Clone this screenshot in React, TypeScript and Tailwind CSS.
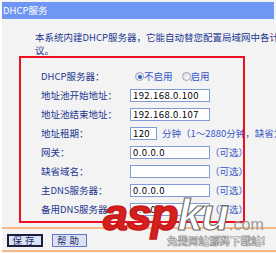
import React from "react";

const Field = ({ w, value }: { w: string; value: string }) => (
  <div
    className={`${w} h-[13px] shrink-0 border border-[#7f9bd8] bg-white pl-[2px] text-[9.5px] leading-[11px] tracking-[0.4px] text-black`}
  >
    {value}
  </div>
);

const Radio = ({ checked }: { checked?: boolean }) => (
  <span className="relative inline-flex h-[9px] w-[9px] shrink-0 items-center justify-center rounded-full border border-[#9aa3b0] bg-gradient-to-br from-[#d8dce2] to-[#ffffff]">
    {checked && <span className="h-[4px] w-[4px] rounded-full bg-[#2a5fd0]" />}
  </span>
);

const Opt = () => <span className="whitespace-nowrap text-[#3556c8]">（可选）</span>;

export default function App() {
  const rows: { label: string; content: React.ReactNode }[] = [
    {
      label: "DHCP服务器：",
      content: (
        <div className="ml-[5px] flex items-center whitespace-nowrap text-[#3556c8]">
          <Radio checked />
          <span>不启用</span>
          <span className="ml-[9px]" />
          <Radio />
          <span>启用</span>
        </div>
      ),
    },
    { label: "地址池开始地址：", content: <Field w="w-[80px]" value="192.168.0.100" /> },
    { label: "地址池结束地址：", content: <Field w="w-[80px]" value="192.168.0.107" /> },
    {
      label: "地址租期：",
      content: (
        <>
          <Field w="w-[27px]" value="120" />
          <span className="ml-[5px] whitespace-nowrap text-[#3556c8]">分钟（1～2880分钟，缺省为120分钟）</span>
        </>
      ),
    },
    {
      label: "网关：",
      content: (
        <>
          <Field w="w-[80px]" value="0.0.0.0" />
          <Opt />
        </>
      ),
    },
    {
      label: "缺省域名：",
      content: (
        <>
          <Field w="w-[80px]" value="" />
          <Opt />
        </>
      ),
    },
    {
      label: "主DNS服务器：",
      content: (
        <>
          <Field w="w-[80px]" value="0.0.0.0" />
          <Opt />
        </>
      ),
    },
    {
      label: "备用DNS服务器：",
      content: (
        <>
          <Field w="w-[80px]" value="0.0.0.0" />
          <Opt />
        </>
      ),
    },
  ];

  return (
    <div className="relative h-[253px] w-[276px] overflow-hidden bg-white font-['Noto_Sans_CJK_SC',sans-serif] text-[9.5px]">
      <div className="ml-[2px] h-full bg-[#f3f3f3]">
        <div className="pt-[2px]">
          <div className="mr-[2px] h-[17px] bg-[#6f96f4] pl-[1px] leading-[17px] text-white">DHCP服务</div>
        </div>
        <div className="mt-[12px] pl-[33px] leading-[13px] text-[#1c3790]">
          <div className="whitespace-nowrap">本系统内建DHCP服务器，它能自动替您配置局域网中各计算机的TCP/IP协</div>
          <div>议。</div>
        </div>
        <div className="mt-[10px] pl-[39px]">
          {rows.map((r) => (
            <div key={r.label} className="flex h-[19px] items-center">
              <div className="w-[89px] shrink-0 whitespace-nowrap text-[#1c3790]">{r.label}</div>
              {r.content}
            </div>
          ))}
        </div>
        <div className="mt-[8px] h-[2px] bg-[#f6b885]" />
        <div className="mt-[5px] flex items-center pl-[5px]">
          <div className="flex h-[13px] w-[36px] items-center justify-center border-2 border-[#1a1f3f] bg-[#dbe2f4] text-[9.5px] leading-[9px] tracking-[3px] text-[#1c2a6a]">
            保存
          </div>
          <div className="ml-[9px] flex h-[13px] w-[35px] items-center justify-center border border-[#6078c8] bg-[#dbe2f4] text-[9.5px] leading-[9px] tracking-[3px] text-[#1c2a6a]">
            帮助
          </div>
        </div>
        <div className="mt-[3px] h-[2px] bg-[#f6b885]" />
      </div>

      {/* red annotation rectangle */}
      <div className="pointer-events-none absolute left-[19px] top-[56px] h-[167px] w-[226px] border-2 border-[#ee1020]" />

      {/* aspku watermark */}
      <div className="pointer-events-none absolute left-[103px] top-[193px] flex items-baseline whitespace-nowrap font-['Liberation_Sans',sans-serif] font-bold italic leading-[44px]">
        <span className="text-[45px] tracking-[-1px] text-[#d52020] [-webkit-text-stroke:1.5px_#c81818]">asp</span>
        <span className="text-[45px] tracking-[-1px] text-white [-webkit-text-stroke:1.2px_#6f6f6f]">ku</span>
        <span className="ml-[1px] text-[16px] font-normal not-italic text-[#9a9a9a]">.com</span>
      </div>
      <div className="pointer-events-none absolute left-[167px] top-[235px] whitespace-nowrap font-['Noto_Sans_CJK_SC',sans-serif] text-[10.5px] font-bold leading-[12px] text-white [-webkit-text-stroke:0.6px_#8a8a8a]">
        免费网站源码下载站!
      </div>
    </div>
  );
}
